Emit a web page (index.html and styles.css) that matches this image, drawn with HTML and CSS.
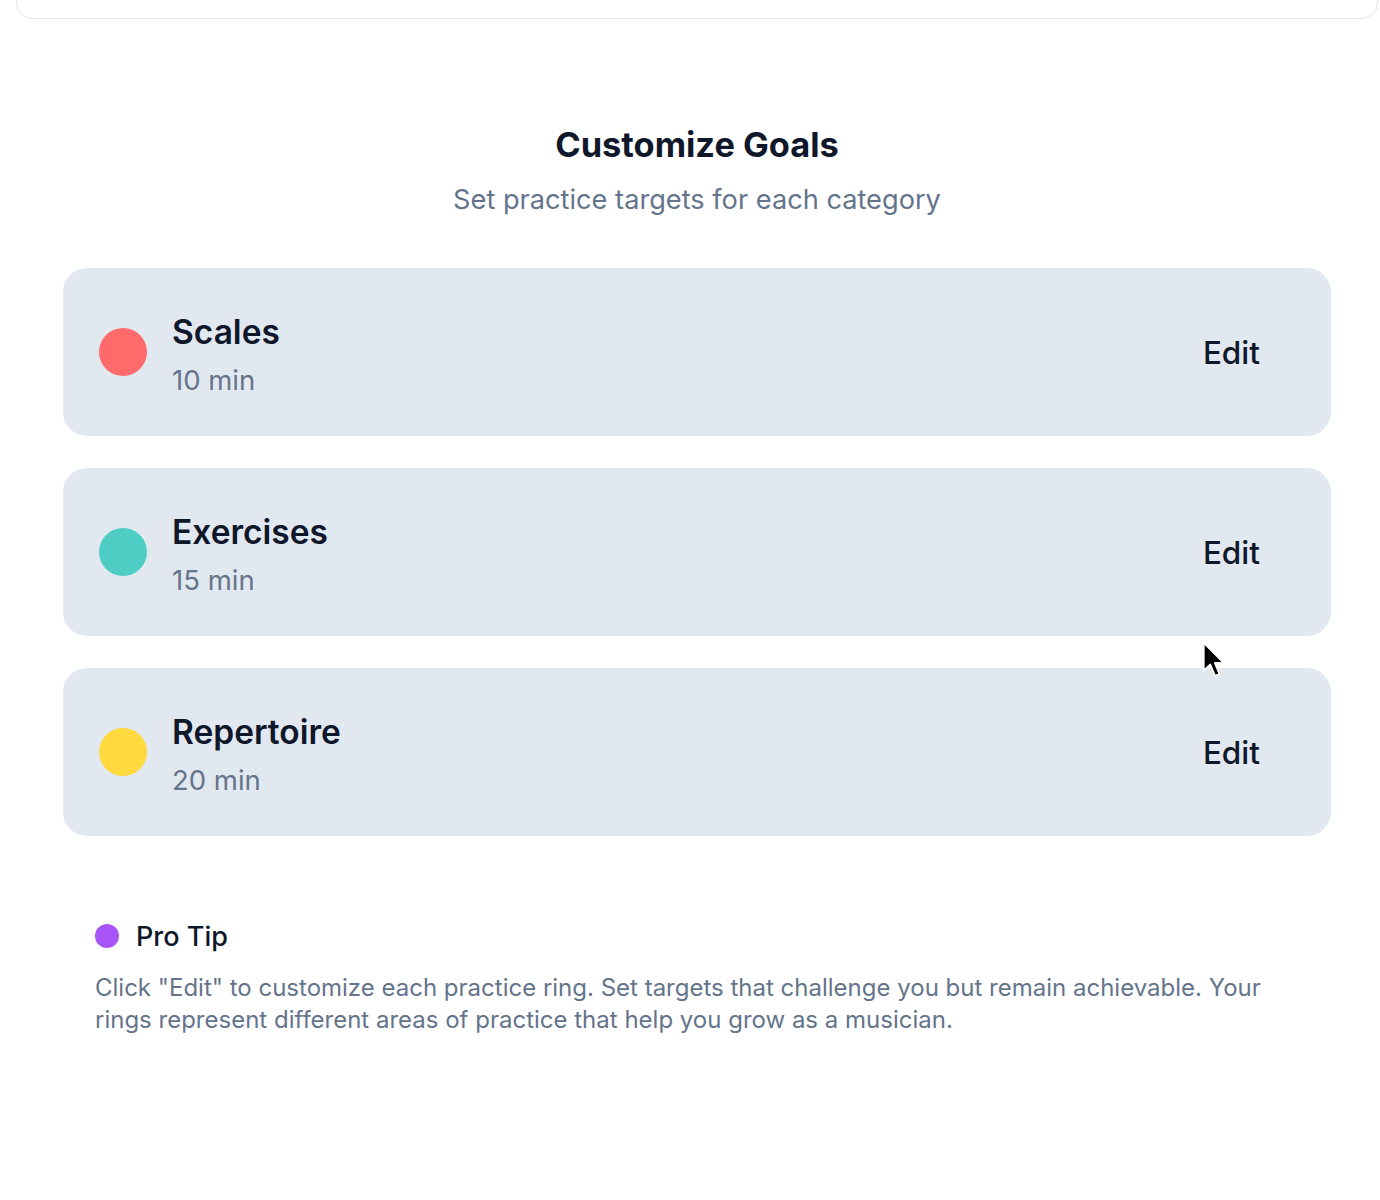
FILE: index.html
```html
<!DOCTYPE html>
<html lang="en">
<head>
<meta charset="utf-8">
<title>Customize Goals</title>
<link rel="stylesheet" href="styles.css">
</head>
<body>
<div class="page">
  <div class="top-card"></div>
  <section class="goals">
    <h1 class="goals-title">Customize Goals</h1>
    <p class="goals-sub">Set practice targets for each category</p>
    <div class="goal-list">
      <div class="goal">
        <span class="dot dot-red"></span>
        <div class="goal-text">
          <div class="goal-name">Scales</div>
          <div class="goal-meta">10 min</div>
        </div>
        <button class="edit">Edit</button>
      </div>
      <div class="goal">
        <span class="dot dot-teal"></span>
        <div class="goal-text">
          <div class="goal-name">Exercises</div>
          <div class="goal-meta">15 min</div>
        </div>
        <button class="edit">Edit</button>
      </div>
      <div class="goal">
        <span class="dot dot-yellow"></span>
        <div class="goal-text">
          <div class="goal-name">Repertoire</div>
          <div class="goal-meta">20 min</div>
        </div>
        <button class="edit">Edit</button>
      </div>
    </div>
    <div class="tip">
      <div class="tip-head"><span class="tip-dot"></span><span class="tip-title">Pro Tip</span></div>
      <p class="tip-text">Click "Edit" to customize each practice ring. Set targets that challenge you but remain achievable. Your rings represent different areas of practice that help you grow as a musician.</p>
    </div>
  </section>
  <svg class="cursor" width="29" height="42" viewBox="0 0 22 34" aria-hidden="true">
    <path d="M1.5 1.5 L1.5 24 L6.8 19 L10.6 28.2 L14.2 26.7 L10.4 17.8 L17.6 17.8 Z" fill="#000" stroke="#fff" stroke-width="1.4" stroke-linejoin="round"/>
  </svg>
</div>
</body>
</html>
```
FILE: styles.css
```css
* { box-sizing: border-box; }
html, body { margin: 0; padding: 0; background: #ffffff; }
body {
  font-family: "Inter", "Liberation Sans", sans-serif;
  color: #0f172a;
  -webkit-font-smoothing: antialiased;
}
.page {
  position: relative;
  width: 1380px;
  height: 1200px;
  overflow: hidden;
}
.top-card {
  margin: -40px 2px 0 16px;
  height: 59px;
  border: 1.5px solid #e2e4e8;
  border-radius: 0 0 16px 16px;
}
.goals {
  width: 1362px;
  margin-left: 16px;
  padding: 0 47px;
}
.goals-title {
  margin: 105px 0 0;
  text-align: center;
  font-size: 34.4px;
  line-height: 42px;
  font-weight: 700;
  color: #0f172a;
}
.goals-sub {
  margin: 17px 0 0;
  text-align: center;
  font-size: 27.2px;
  line-height: 34px;
  font-weight: 400;
  color: #64748b;
}
.goal-list {
  margin-top: 51px;
  display: flex;
  flex-direction: column;
  gap: 32px;
}
.goal {
  height: 168px;
  background: #e2e8f0;
  border-radius: 24px;
  display: flex;
  align-items: center;
  padding: 0 51px 0 36px;
}
.dot {
  width: 48px;
  height: 48px;
  border-radius: 50%;
  flex: none;
}
.dot-red { background: #ff6b6b; }
.dot-teal { background: #4ecdc4; }
.dot-yellow { background: #ffd93d; }
.goal-text {
  margin-left: 25px;
  padding-top: 4px;
  flex: 1;
  display: flex;
  flex-direction: column;
  gap: 8px;
}
.goal-name {
  font-size: 33.5px;
  line-height: 44px;
  font-weight: 600;
  color: #0f172a;
}
.goal-meta {
  font-size: 27.5px;
  line-height: 36px;
  font-weight: 400;
  color: #64748b;
}
.edit {
  background: transparent;
  border: 0;
  font-family: inherit;
  font-size: 31.5px;
  font-weight: 500;
  color: #0f172a;
  padding: 8px 20px;
  cursor: pointer;
}
.tip {
  margin-top: 82px;
  padding: 0 32px;
}
.tip-head {
  display: flex;
  align-items: center;
  height: 36px;
}
.tip-dot {
  width: 24px;
  height: 24px;
  border-radius: 50%;
  background: #a855f7;
  flex: none;
}
.tip-title {
  margin-left: 17px;
  font-size: 27px;
  font-weight: 500;
  color: #0f172a;
}
.tip-text {
  margin: 18px 0 0;
  font-size: 24px;
  line-height: 32px;
  color: #64748b;
  max-width: 1200px;
}
.cursor {
  position: absolute;
  left: 1201px;
  top: 641px;
}
```
